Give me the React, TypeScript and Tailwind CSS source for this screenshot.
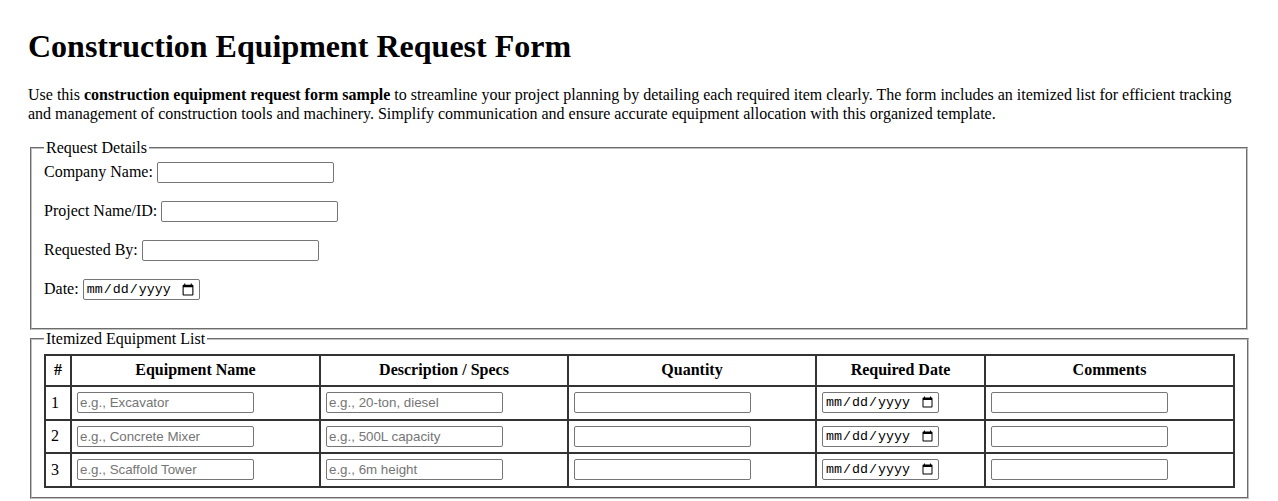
import React from "react";

const inputCls =
  "h-[21px] rounded-[2px] border border-[#767676] bg-white px-[2px] align-middle font-['Liberation_Sans',Arial,sans-serif] text-[13.333px] text-black placeholder:text-[#757575] outline-none";

const dateCls =
  "h-[21px] w-[117px] rounded-[2px] border border-[#767676] bg-white px-[2px] align-middle font-['Liberation_Mono',monospace] text-[13.333px] text-black outline-none";

const fieldsetBase = "mx-[2px] border-2 border-[#c0c0c0] [border-style:groove] px-[12px] pb-[9.5px]";

const rows = [
  { n: 1, name: "e.g., Excavator", spec: "e.g., 20-ton, diesel" },
  { n: 2, name: "e.g., Concrete Mixer", spec: "e.g., 500L capacity" },
  { n: 3, name: "e.g., Scaffold Tower", spec: "e.g., 6m height" },
];

function DetailRow({ label, children }: { label: string; children: React.ReactNode }) {
  return (
    <div className="mb-[18px] flex h-[21px] items-center gap-[4px]">
      <label>{label}</label>
      {children}
    </div>
  );
}

export default function App() {
  const cell = "border border-[#333] px-[5px] pt-[5px] pb-[5.5px] align-middle";
  return (
    <div className="min-h-screen bg-white px-[28px] pt-[28px] font-['Liberation_Serif','Times_New_Roman',serif] text-[16px] leading-[1.15] text-black">
      <h1 className="mb-[21.44px] text-[32px] font-bold">Construction Equipment Request Form</h1>

      <p className="mb-[16px]">
        Use this <strong>construction equipment request form sample</strong> to streamline your project
        planning by detailing each required item clearly. The form includes an itemized list for efficient
        tracking and management of construction tools and machinery. Simplify communication and ensure
        accurate equipment allocation with this organized template.
      </p>

      <form>
        <fieldset className={fieldsetBase + " pt-[4.6px]"}>
          <legend className="px-[2px]">Request Details</legend>
          <DetailRow label="Company Name:">
            <input type="text" className={inputCls + " w-[177px]"} />
          </DetailRow>
          <DetailRow label="Project Name/ID:">
            <input type="text" className={inputCls + " w-[177px]"} />
          </DetailRow>
          <DetailRow label="Requested By:">
            <input type="text" className={inputCls + " w-[177px]"} />
          </DetailRow>
          <DetailRow label="Date:">
            <input type="date" className={dateCls} />
          </DetailRow>
        </fieldset>

        <fieldset className={fieldsetBase + " pt-[6.6px]"}>
          <legend className="px-[2px]">Itemized Equipment List</legend>
          <table className="w-full table-fixed border-separate border-spacing-0 border border-[#333]">
            <colgroup>
              <col className="w-[26px]" />
              <col className="w-[249px]" />
              <col className="w-[248px]" />
              <col className="w-[248px]" />
              <col className="w-[169px]" />
              <col className="w-[249px]" />
            </colgroup>
            <thead>
              <tr>
                <th className={cell}>#</th>
                <th className={cell}>Equipment Name</th>
                <th className={cell}>Description / Specs</th>
                <th className={cell}>Quantity</th>
                <th className={cell}>Required Date</th>
                <th className={cell}>Comments</th>
              </tr>
            </thead>
            <tbody>
              {rows.map((r) => (
                <tr key={r.n}>
                  <td className={cell}>{r.n}</td>
                  <td className={cell}>
                    <input type="text" placeholder={r.name} className={inputCls + " w-[177px]"} />
                  </td>
                  <td className={cell}>
                    <input type="text" placeholder={r.spec} className={inputCls + " w-[177px]"} />
                  </td>
                  <td className={cell}>
                    <input type="number" className={inputCls + " w-[177px]"} />
                  </td>
                  <td className={cell}>
                    <input type="date" className={dateCls} />
                  </td>
                  <td className={cell}>
                    <input type="text" className={inputCls + " w-[177px]"} />
                  </td>
                </tr>
              ))}
            </tbody>
          </table>
        </fieldset>
      </form>
    </div>
  );
}
